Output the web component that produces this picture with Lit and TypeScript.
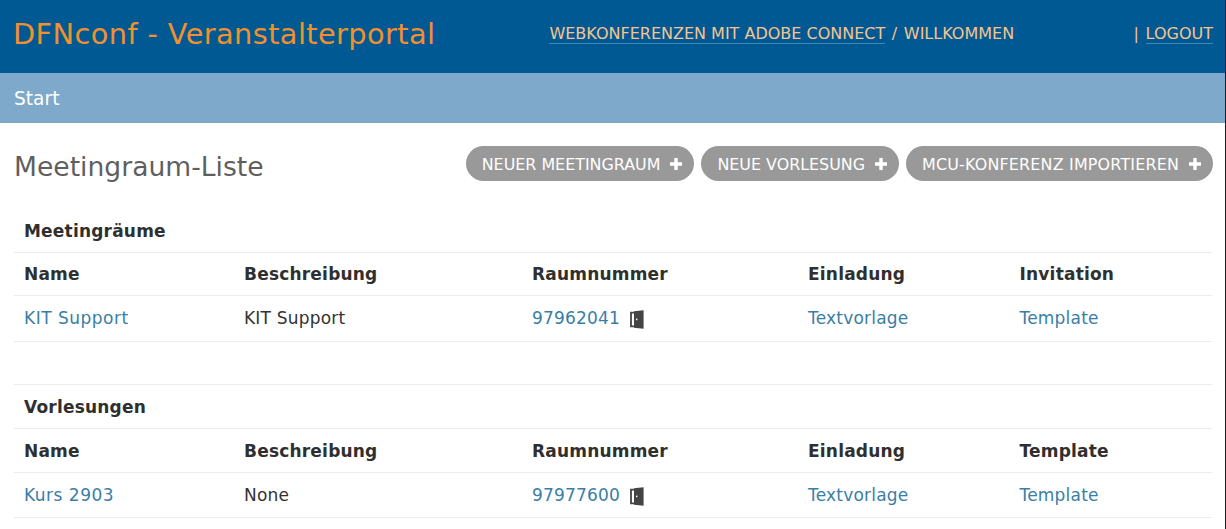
import { LitElement, html, css } from "lit";
import { customElement } from "lit/decorators.js";

const door = html`<svg class="door" width="14" height="19" viewBox="0 0 14 19">
  <path d="M4 2.7H1v13.6H4" fill="none" stroke="#444" stroke-width="1.8"/>
  <path d="M4 1.2L13.6.3v18.4L4 17.8z" fill="#444"/>
  <rect x="6" y="8.6" width="1.4" height="1.6" fill="#fff"/>
</svg>`;

const plus = html`<svg class="plus" width="12" height="12" viewBox="0 0 12 12"><path d="M4.3 0h3.4v4.3H12v3.4H7.7V12H4.3V7.7H0V4.3h4.3z" fill="#fff"/></svg>`;

@customElement("app-root")
export class AppRoot extends LitElement {
  static styles = css`
    :host { display: block; box-sizing: border-box; border-right: 1px solid #1c1c1c; font-family: "DejaVu Sans", sans-serif; background: #fff; height: 529px; overflow: hidden; color: #333; font-size: 16px; }
    a { text-decoration: none; }
    .top { height: 73px; background: #005993; display: flex; align-items: center; justify-content: space-between; padding: 0 12px 0 13px; }
    .brand { font-size: 28.8px; letter-spacing: 0.4px; color: #f0902e; margin-top: -6px; }
    .top-nav { font-size: 16px; color: #f6c48f; display: flex; align-items: center; white-space: pre; margin-top: -6px; word-spacing: 1.5px; }
    .top-nav a { color: #f6c48f; border-bottom: 1px solid #3f87b5; line-height: 19px; word-spacing: 0; }
    .blur { display: inline-block; width: 119.5px; }
    .sub { height: 50px; background: #7fa9ca; color: #fff; font-size: 18.6px; display: flex; align-items: center; padding-left: 14px; }
    .head { display: flex; justify-content: space-between; align-items: center; padding: 23px 12px 0 14px; height: 35px; }
    h1 { margin: 6px 0 0; font-size: 26.6px; font-weight: 400; color: #5f5f5f; }
    .btns { display: flex; gap: 7px; }
    .btn { display: flex; align-items: center; gap: 10px; height: 35px; border-radius: 17.5px; background: #999; color: #fff; font-size: 15.9px; padding: 0 12px 0 16px; white-space: nowrap; }
    .btn span { margin-top: 2px; }
    .btn.long { letter-spacing: 0.2px; }
    .table { padding: 0 13px 0 14px; margin-top: 28px; font-size: 17px; letter-spacing: 0.2px; }
    .row { display: grid; grid-template-columns: 220px 288px 276px 211.5px 1fr; padding-left: 10px; border-bottom: 1px solid #ececec; align-items: center; }
    .h { height: 42px; font-weight: 700; color: #2f2f2f; letter-spacing: 0.2px; }
    .d { height: 43px; padding-bottom: 2px; }
    .cap { height: 43px; }
    .gap { height: 42px; border-bottom: 1px solid #ececec; }
    .alt.h { height: 43px; }
    .alt.cap { height: 43px; }
    .alt.d { height: 44px; padding-bottom: 0; }
    .d a { color: #3a7ea5; }
    .d a.wide { letter-spacing: 0.5px; }
    .num { display: flex; align-items: center; gap: 10px; }
    .door { flex: none; margin-top: 4px; }
    .alt .door { margin-top: 2px; }
  `;

  private section(title: string, last: string, name: string, desc: string, num: string, alt: boolean) {
    const c = alt ? "alt" : "";
    return html`
      <div class="row h cap ${c}"><span>${title}</span></div>
      <div class="row h ${c}"><span>Name</span><span>Beschreibung</span><span>Raumnummer</span><span>Einladung</span><span>${last}</span></div>
      <div class="row d ${c}"><a class="wide">${name}</a><span>${desc}</span><span class="num"><a>${num}</a>${door}</span><a>Textvorlage</a><a>Template</a></div>`;
  }

  render() {
    return html`
      <div class="top">
        <div class="brand">DFNconf - Veranstalterportal</div>
        <div class="top-nav"><a>WEBKONFERENZEN MIT ADOBE CONNECT</a> / WILLKOMMEN<span class="blur"></span>| <a>LOGOUT</a></div>
      </div>
      <div class="sub">Start</div>
      <div class="head">
        <h1>Meetingraum-Liste</h1>
        <div class="btns">
          <a class="btn"><span>NEUER MEETINGRAUM</span>${plus}</a>
          <a class="btn"><span>NEUE VORLESUNG</span>${plus}</a>
          <a class="btn long"><span>MCU-KONFERENZ IMPORTIEREN</span>${plus}</a>
        </div>
      </div>
      <div class="table">
        ${this.section("Meetingräume", "Invitation", "KIT Support", "KIT Support", "97962041", false)}
        <div class="gap"></div>
        ${this.section("Vorlesungen", "Template", "Kurs 2903", "None", "97977600", true)}
      </div>`;
  }
}
